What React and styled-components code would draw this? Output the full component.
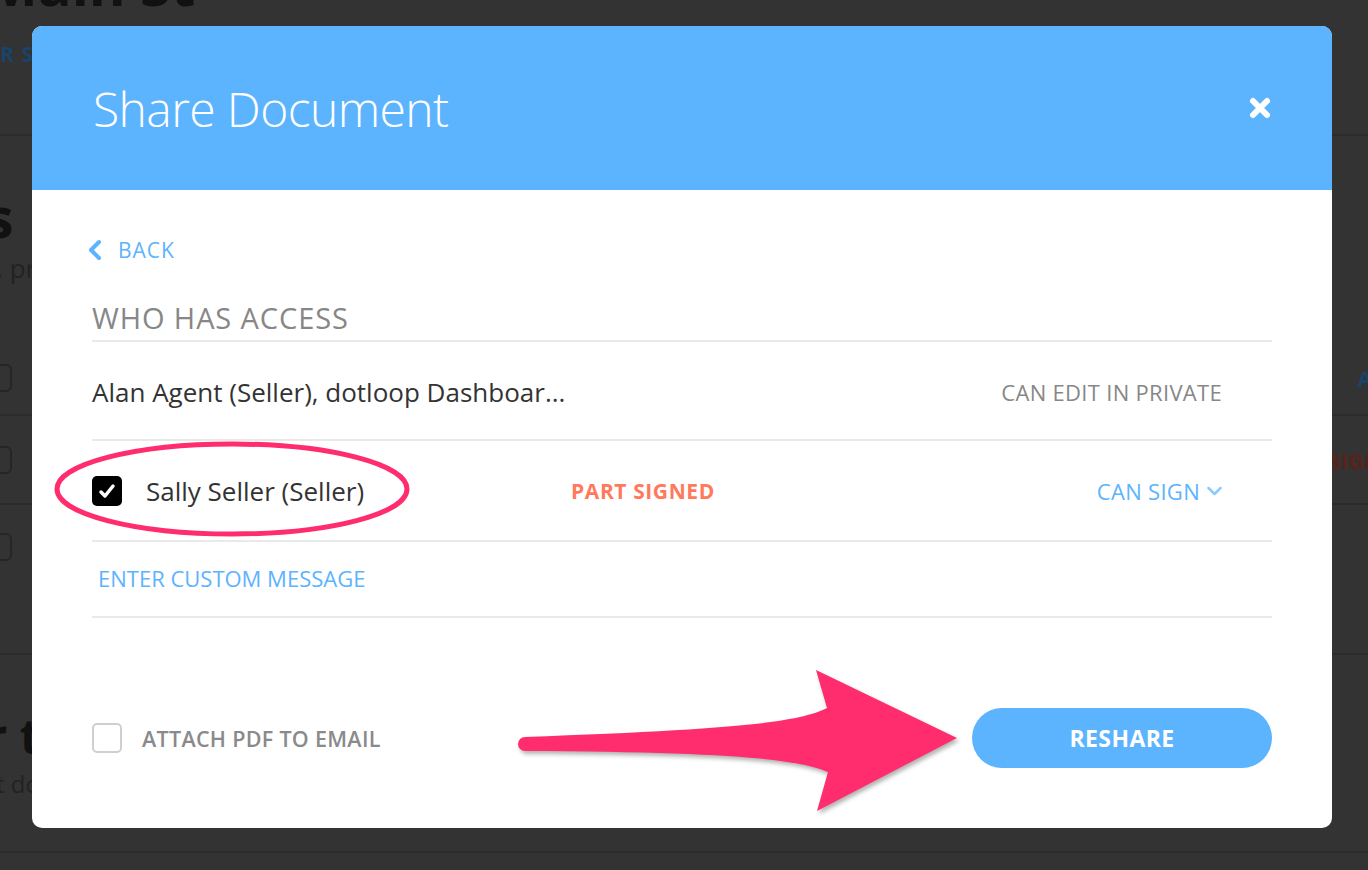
import styled, { createGlobalStyle } from "styled-components";

const GlobalStyle = createGlobalStyle`
  html, body {
    margin: 0;
    padding: 0;
    background: #333333;
    font-family: "Open Sans", "DejaVu Sans", sans-serif;
  }
  * {
    box-sizing: border-box;
  }
`;

const Page = styled.div`
  position: relative;
  width: 1368px;
  height: 870px;
  overflow: hidden;
  background: #333333;
`;

// the listing page that sits dimmed behind the dialog
const PageContent = styled.div`
  display: flex;
  flex-direction: column;
  width: 1368px;
`;

const PageTitle = styled.h1`
  margin: -46px 0 0 ${(p) => p.$shift}px;
  font-size: 56px;
  font-weight: 700;
  color: #111111;
  line-height: 60px;
  white-space: nowrap;
`;

const PageTag = styled.div`
  margin: 28px 0 0 ${(p) => p.$shift}px;
  font-size: 21px;
  line-height: 24px;
  font-weight: 700;
  color: #1b4268;
  letter-spacing: 1px;
  white-space: nowrap;
`;

const PageDivider = styled.div`
  height: 2px;
  flex-shrink: 0;
  background: #2b2b2b;
  margin-top: ${(p) => p.$top}px;
`;

const SectionHead = styled.h2`
  margin: ${(p) => p.$top}px 0 0 ${(p) => p.$shift}px;
  font-size: ${(p) => p.$size}px;
  font-weight: 700;
  color: #111111;
  line-height: ${(p) => p.$size + 6}px;
  white-space: nowrap;
`;

const SectionSub = styled.div`
  margin: ${(p) => p.$top}px 0 0 ${(p) => p.$shift}px;
  font-size: ${(p) => p.$size}px;
  line-height: ${(p) => p.$size + 6}px;
  color: #222222;
  white-space: nowrap;
`;

const BgRow = styled.div`
  display: flex;
  align-items: ${(p) => p.$align || "center"};
  justify-content: space-between;
  height: ${(p) => p.$h}px;
  padding: ${(p) => p.$pad || "0"};
  border-bottom: 2px solid #2b2b2b;
  overflow: hidden;
`;

const BgCheck = styled.div`
  width: 30px;
  height: 28px;
  margin-left: -18px;
  border: 2px solid #262626;
  border-radius: 6px;
  flex-shrink: 0;
`;

const BgAction = styled.div`
  font-size: 22px;
  line-height: 28px;
  font-weight: 700;
  color: ${(p) => p.$color};
  margin-right: ${(p) => p.$right}px;
  white-space: nowrap;
`;

const Overlay = styled.div`
  position: absolute;
  inset: 0;
  padding: 26px 0 0 32px;
`;

const Modal = styled.div`
  position: relative;
  width: 1300px;
  height: 802px;
  background: #ffffff;
  border-radius: 10px;
  overflow: hidden;
  display: flex;
  flex-direction: column;
`;

const Header = styled.div`
  height: 164px;
  flex-shrink: 0;
  background: #5cb3fe;
  display: flex;
  align-items: center;
  justify-content: space-between;
  padding: 0 60px 0 61px;
`;

const Title = styled.h1`
  margin: 0;
  font-size: 48px;
  font-weight: 300;
  color: #ffffff;
  letter-spacing: -0.6px;
`;

const CloseButton = styled.button`
  border: 0;
  background: none;
  padding: 0;
  display: flex;
  cursor: pointer;
`;

const Body = styled.div`
  flex: 1;
  display: flex;
  flex-direction: column;
  padding: 40px 60px 0;
`;

const BackLink = styled.a`
  display: flex;
  align-items: center;
  gap: 16px;
  height: 40px;
  margin-left: -4px;
  font-size: 21px;
  color: #5cb3fe;
  letter-spacing: 1px;
  cursor: pointer;
`;

const SectionTitle = styled.div`
  margin-top: 28px;
  line-height: 40px;
  padding-bottom: 2px;
  font-size: 29px;
  font-weight: 500;
  color: #878787;
  letter-spacing: 0.9px;
  border-bottom: 2px solid #e9e9e9;
`;

const Row = styled.div`
  position: relative;
  display: grid;
  grid-template-columns: 479px 1fr auto;
  align-items: center;
  height: ${(p) => p.$h}px;
  padding: ${(p) => p.$top || 0}px 50px 0 0;
  border-bottom: 2px solid #e9e9e9;
`;

const Person = styled.div`
  display: flex;
  align-items: center;
  gap: 24px;
  font-size: 26px;
  color: #333333;
  white-space: nowrap;
`;

const CheckBox = styled.span`
  width: 30px;
  height: 30px;
  flex-shrink: 0;
  border-radius: 5px;
  display: flex;
  align-items: center;
  justify-content: center;
  background: ${(p) => (p.$checked ? "#000000" : "#ffffff")};
  border: ${(p) => (p.$checked ? "none" : "2px solid #cfcfcf")};
`;

const Status = styled.div`
  font-size: 21px;
  font-weight: 700;
  color: #ff7a5c;
  letter-spacing: 0.6px;
`;

const Permission = styled.div`
  grid-column: 3;
  display: flex;
  align-items: center;
  gap: 7px;
  font-size: 22px;
  color: ${(p) => (p.$link ? "#5cb3fe" : "#878787")};
  font-weight: ${(p) => (p.$link ? 400 : 500)};
  letter-spacing: 0.3px;
`;

const MessageLink = styled.a`
  display: flex;
  align-items: center;
  height: 76px;
  padding: 0 0 2px 6px;
  font-size: 22px;
  color: #5cb3fe;
  border-bottom: 2px solid #e9e9e9;
  cursor: pointer;
`;

const Footer = styled.div`
  display: flex;
  align-items: center;
  justify-content: space-between;
  margin-top: 90px;
  height: 60px;
`;

const AttachLabel = styled.label`
  display: flex;
  align-items: center;
  gap: 20px;
  font-size: 21.5px;
  font-weight: 600;
  color: #8a8a8a;
  letter-spacing: 0.3px;
`;

const ReshareButton = styled.button`
  width: 300px;
  height: 60px;
  border: 0;
  border-radius: 30px;
  background: #5cb3fe;
  color: #ffffff;
  font-family: inherit;
  font-size: 23px;
  font-weight: 700;
  letter-spacing: 0.4px;
  cursor: pointer;
`;

const Ellipse = styled.svg`
  position: absolute;
  left: -38px;
  top: 0;
  pointer-events: none;
`;

const Arrow = styled.svg`
  position: absolute;
  left: 484px;
  top: 642px;
  filter: drop-shadow(2px 3px 2px rgba(0, 0, 0, 0.3));
  pointer-events: none;
`;

const App = () => {
  return (
    <Page>
      <GlobalStyle />
      <PageContent>
        <PageTitle $shift={-15}>Main St</PageTitle>
        <PageTag $shift={-30}>FOR SALE</PageTag>
        <PageDivider $top={68} />
        <SectionHead $top={49} $shift={-143} $size={56}>
          Tasks
        </SectionHead>
        <SectionSub $top={5} $shift={-66} $size={26}>
          tasks, priorities
        </SectionSub>
        <BgRow $h={132} $align="flex-end" $pad="0 0 22px">
          <BgCheck />
          <BgAction $color="#1b4268" $right={-70}>
            ASSIGN
          </BgAction>
        </BgRow>
        <BgRow $h={89}>
          <BgCheck />
          <BgAction $color="#5a2218" $right={-14}>
            SIGN
          </BgAction>
        </BgRow>
        <BgRow $h={150} $align="flex-start" $pad="28px 0 0">
          <BgCheck />
        </BgRow>
        <SectionHead $top={54} $shift={-140} $size={48}>
          Letter templates
        </SectionHead>
        <SectionSub $top={6} $shift={-38} $size={24}>
          Edit documents
        </SectionSub>
        <PageDivider $top={52} />
      </PageContent>

      <Overlay>
        <Modal>
          <Header>
            <Title>Share Document</Title>
            <CloseButton aria-label="Close">
              <svg width="24" height="24" viewBox="0 0 24 24">
                <path
                  d="M5 5 L19 19 M19 5 L5 19"
                  stroke="#ffffff"
                  strokeWidth="6"
                  strokeLinecap="round"
                />
              </svg>
            </CloseButton>
          </Header>

          <Body>
            <BackLink>
              <svg width="14" height="22" viewBox="0 0 14 22">
                <path
                  d="M11 3 L3 11 L11 19"
                  fill="none"
                  stroke="#5cb3fe"
                  strokeWidth="4"
                  strokeLinecap="round"
                  strokeLinejoin="round"
                />
              </svg>
              BACK
            </BackLink>

            <SectionTitle>WHO HAS ACCESS</SectionTitle>

            <Row $h={99} $top={3}>
              <Person>Alan Agent (Seller), dotloop Dashboar...</Person>
              <Permission>CAN EDIT IN PRIVATE</Permission>
            </Row>

            <Row $h={101}>
              <Person>
                <CheckBox $checked>
                  <svg width="18" height="18" viewBox="0 0 18 18">
                    <path
                      d="M3 10 L7 14 L15 4"
                      fill="none"
                      stroke="#ffffff"
                      strokeWidth="3.5"
                      strokeLinecap="round"
                      strokeLinejoin="round"
                    />
                  </svg>
                </CheckBox>
                Sally Seller (Seller)
              </Person>
              <Status>PART SIGNED</Status>
              <Permission $link>
                CAN SIGN
                <svg width="15" height="10" viewBox="0 0 15 10">
                  <path
                    d="M1.5 2 L7.5 8 L13.5 2"
                    fill="none"
                    stroke="#8ec9ff"
                    strokeWidth="2.5"
                    strokeLinecap="round"
                    strokeLinejoin="round"
                  />
                </svg>
              </Permission>
              <Ellipse width="356" height="96" viewBox="0 0 356 96">
                <ellipse
                  cx="178"
                  cy="48"
                  rx="175"
                  ry="45"
                  fill="none"
                  stroke="#ff2d6e"
                  strokeWidth="5"
                />
              </Ellipse>
            </Row>

            <MessageLink>ENTER CUSTOM MESSAGE</MessageLink>

            <Footer>
              <AttachLabel>
                <CheckBox />
                ATTACH PDF TO EMAIL
              </AttachLabel>
              <ReshareButton>RESHARE</ReshareButton>
            </Footer>
          </Body>

          <Arrow width="446" height="150" viewBox="0 0 446 150">
            <path
              d="M9 69 C200 62 280 56 311 40 L300 2 L441 70 L301 143 L312 104 C280 90 200 84 9 83 A7 7 0 0 1 9 69 Z"
              fill="#ff2d6e"
            />
          </Arrow>
        </Modal>
      </Overlay>
    </Page>
  );
};

export default App;
